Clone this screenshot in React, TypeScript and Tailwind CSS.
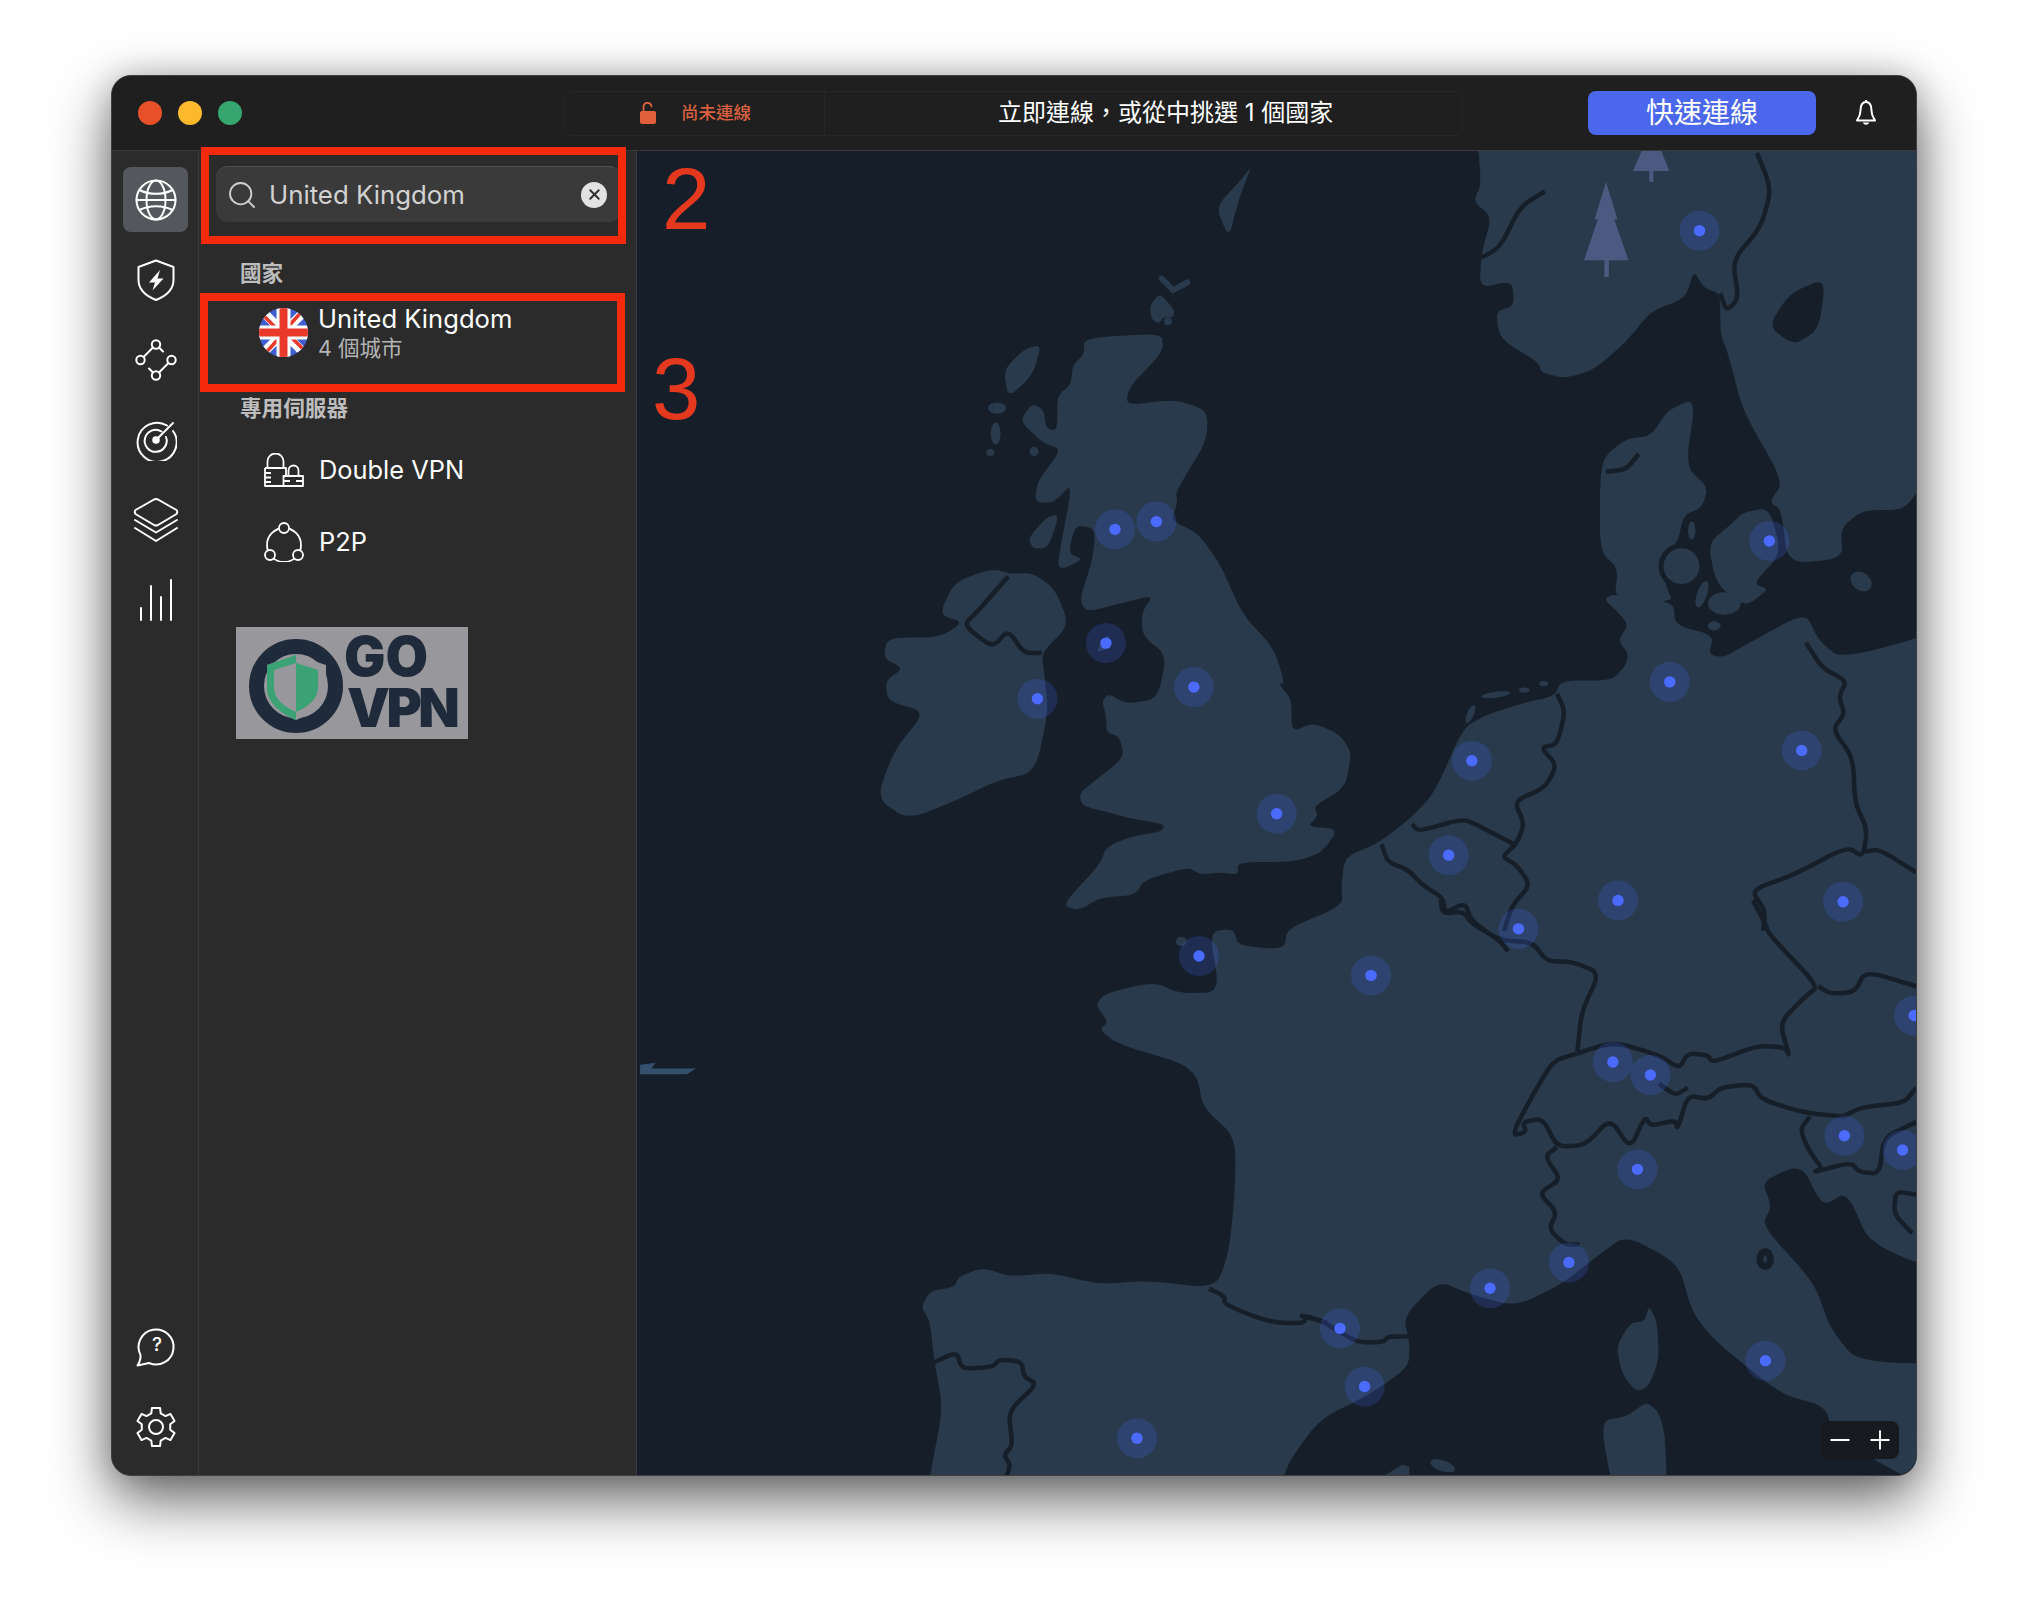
import { Search, X, Minus, Plus } from 'lucide-react';

// crop coordinates -> map coordinates, the outlines were traced per region
const north = 'translate(494.8 116) scale(.345 .3945)';
const east = 'translate(1005 116) scale(.3156 .3945)';
const southWest = 'translate(494.8 695.8) scale(.345 .296)';
const southEast = 'translate(1005 695.8) scale(.3156 .296)';

const SEA = '#161f29';
const LAND = '#283a4b';

// rounds each corner of a traced outline a little, keeps the coast shape
function curve(points: string, closed = true) {
  const p = points.trim().split(/\s+/).map((q) => q.split(',').map(Number));
  const t = 0.36;
  const toward = (a: number[], b: number[]) => `${a[0] + (b[0] - a[0]) * t} ${a[1] + (b[1] - a[1]) * t}`;
  const n = p.length;
  let d = '';
  if (closed) {
    for (let i = 0; i < n; i++) {
      const prev = p[(i + n - 1) % n];
      const next = p[(i + 1) % n];
      d += `${i === 0 ? 'M' : 'L'}${toward(p[i], prev)}Q${p[i][0]} ${p[i][1]} ${toward(p[i], next)}`;
    }
    return `${d}Z`;
  }
  d = `M${p[0][0]} ${p[0][1]}`;
  for (let i = 1; i < n - 1; i++) {
    d += `L${toward(p[i], p[i - 1])}Q${p[i][0]} ${p[i][1]} ${toward(p[i], p[i + 1])}`;
  }
  return `${d}L${p[n - 1][0]} ${p[n - 1][1]}`;
}

const britain =
  '995,368 1170,358 1172,395 1095,465 1090,500 1200,488 1272,510 1270,570 1200,670 1205,690 1190,725 1250,750 1300,810 1350,910 1420,975 1445,1045 1430,1045 1460,1075 1460,1140 1510,1122 1568,1145 1595,1180 1580,1250 1510,1285 1520,1305 1495,1325 1565,1330 1530,1375 1470,1395 1340,1395 1340,1420 1300,1415 1255,1420 1230,1405 1130,1430 1110,1460 1030,1465 985,1490 945,1480 1030,1400 1045,1365 1100,1345 1170,1335 1175,1320 1100,1310 1060,1300 990,1285 985,1260 1020,1235 1085,1190 1075,1150 1045,1140 1045,1110 1035,1080 1050,1065 1090,1085 1160,1075 1180,990 1125,950 1125,905 1150,872 1090,885 1000,905 985,880 1015,800 1020,740 975,735 960,790 990,800 975,810 945,820 935,810 970,650 930,690 885,690 890,650 945,585 905,575 850,530 880,495 905,510 910,545 935,550 935,480 965,460 970,420 995,400';
const ireland =
  '555,955 670,955 725,925 670,910 705,845 790,820 830,830 880,828 930,860 962,930 900,985 905,1020 915,1100 885,1220 800,1235 720,1270 600,1312 530,1270 570,1175 640,1100 555,1080 550,1040 590,1015 545,995';
const scandinavia =
  '430,-60 445,65 425,100 470,130 445,200 440,270 520,255 525,305 480,315 490,370 585,415 590,435 650,447 720,430 800,375 860,315 945,290 965,235 990,270 1030,280 1030,360 1050,400 1085,510 1185,650 1150,690 1180,705 1195,810 1330,800 1325,740 1380,705 1480,705 1520,660 1800,640 1800,-60';
const denmark =
  '735,650 745,600 800,565 860,560 900,510 970,485 945,620 1000,660 985,700 940,715 925,770 880,800 900,860 915,885 770,880 780,820 735,785';
const continent =
  '1248,459 1240,463 1251,473 1259,483 1251,495 1259,505 1257,514 1246,526 1207,526 1202,538 1179,543 1148,553 1131,563 1109,613 1090,633 1065,652 1040,662 1037,684 1038,700 995,718 993,734 957,731 954,718 935,720 943,767 912,768 892,759 854,768 847,777 857,790 850,796 864,807 914,822 926,833 930,856 955,879 955,921 950,968 940,996 885,990 850,993 812,984 781,987 760,980 741,987 738,995 719,998 712,1011 719,1021 722,1051 729,1089 719,1140 712,1200 990,1200 990,1140 1019,1098 1059,1078 1089,1057 1090,1039 1085,1018 1112,990 1138,1001 1172,1010 1207,993 1235,971 1257,955 1298,977 1308,1014 1325,1036 1377,1078 1411,1087 1418,1110 1453,1131 1480,1145 1560,1200 1560,1054 1437,1054 1415,1027 1403,992 1362,947 1370,933 1362,913 1393,900 1409,933 1428,921 1447,965 1560,1000 1560,470 1425,510 1406,495 1396,473 1352,497 1333,508 1321,506 1325,491 1295,483 1294,465';

const landNorth = [
  britain,
  ireland,
  '815,430 860,390 900,380 880,440 825,485',
  '870,760 910,720 940,712 915,780 880,780',
  '1290,110 1345,60 1372,28 1340,100 1320,172',
  '1020,985 1050,945 1055,975',
];
const bordersEast = [
  '630,1065 650,1100 630,1165 590,1170 630,1205 600,1250 525,1275 550,1320 530,1360 495,1385 530,1400 565,1440 520,1480 500,1530',
  '200,1360 215,1395 265,1410 300,1440 350,1465 355,1495 405,1475 420,1510 490,1550 510,1570',
  '275,1320 290,1335 400,1310 440,1325 525,1360',
  '1240,965 1280,1015 1340,1040 1320,1070 1335,1105 1305,1135 1355,1190 1360,1280 1390,1330 1380,1385 1340,1365 1210,1420 1105,1450 1140,1490 1135,1530',
  '1380,1375 1420,1370 1510,1415',
  '1120,5 1155,75 1130,150 1060,215 1075,290 1045,315 1030,280',
  '600,80 540,110 490,190 445,210',
  '750,630 800,625 830,595',
];
const bordersSouthEast = [
  '345,0 350,35 400,30 420,60 490,105 570,110 605,160 665,160 735,190 690,290 680,395',
  '680,400 770,370 880,405 930,440 950,400 1000,405 1010,425 1120,380 1190,385 1200,410 1175,320 1240,250 1270,225 1150,90 1140,60 1110,0',
  '1270,225 1300,245 1360,240 1385,185 1510,225',
  '680,400 620,420 570,510 530,590 525,615 555,605 545,580 595,570 630,645 700,640 760,570 810,650 845,565 860,590 920,575 925,600 950,510 1000,520 1030,490 1110,480 1130,520 1230,555 1330,565',
  '880,480 920,510 950,490',
  '630,645 600,670 640,730 585,765 630,815 610,860 650,900 685,900',
  '1330,565 1380,540 1480,530 1510,490',
  '1250,565 1225,600 1250,660 1280,700 1255,712 1350,685 1370,710 1420,715 1430,620 1510,580',
  '1510,770 1460,760 1455,820 1500,870',
  '0,1085 55,1100 85,1120 140,1155 205,1155 215,1140 265,1140',
];
const bordersSouthWest = [
  '1275,1015 1310,1035 1310,1055 1380,1090 1430,1105 1490,1105 1490,1085 1540,1105',
  '655,1210 710,1180 720,1225 790,1220 805,1200 855,1205 860,1245 890,1265 825,1335 835,1425 815,1450 830,1475 820,1510',
];

const servers = [
  [862, 409], [894, 403], [855, 497], [802, 540], [923, 531], [987, 629], [1138, 588], [1120, 661],
  [1174, 718], [1251, 696], [1425, 697], [1060, 754], [927, 739], [1314, 178], [1368, 418], [1291, 527],
  [1393, 580], [1247, 821], [1276, 831], [1266, 904], [1426, 878], [1471, 889], [1480, 785], [1213, 976],
  [1152, 996], [1036, 1027], [1055, 1072], [879, 1112], [1365, 1052],
];

function EuropeMap() {
  const line = { fill: 'none', stroke: SEA, strokeWidth: 4.5, vectorEffect: 'non-scaling-stroke' as const, strokeLinejoin: 'round' as const };
  return (
    <svg viewBox="492.4 116.4 989 1024" preserveAspectRatio="none" className="block w-full h-full">
      <rect x="490" y="114" width="995" height="1030" fill={SEA} />
      <path d={curve(continent)} fill={LAND} />
      <g transform={north} fill={LAND}>
        {landNorth.map((d) => (
          <path key={d} d={curve(d)} />
        ))}
        <ellipse cx="800" cy="505" rx="20" ry="11" />
        <ellipse cx="797" cy="555" rx="11" ry="22" />
        <ellipse cx="785" cy="592" rx="9" ry="7" />
        <ellipse cx="883" cy="590" rx="10" ry="9" />
        <path d={curve('825,835 780,880 755,905 725,930 790,975 825,940 860,985 900,985', false)} {...line} />
      </g>
      {/* Orkney and Shetland */}
      <path d="M898 215L907 224L918 218" fill="none" stroke={LAND} strokeWidth="4.5" strokeLinecap="round" />
      <path d={curve('889,236 896,227 902,232 908,240 907,245 899,245 896,250 890,246')} fill={LAND} />
      <circle cx="903" cy="248" r="3" fill={LAND} />
      <g transform={east} fill={LAND}>
        <path d={curve(scandinavia)} />
        <path d={curve(denmark)} />
        <ellipse cx="935" cy="815" rx="50" ry="40" stroke={SEA} strokeWidth="5" vectorEffect="non-scaling-stroke" />
        <path d={curve('1060,730 1085,710 1150,700 1180,790 1110,850 1150,860 1090,895 1020,850 1000,770')} />
        <ellipse cx="1040" cy="888" rx="40" ry="22" />
        <ellipse cx="985" cy="870" rx="12" ry="28" transform="rotate(25 985 870)" />
        <ellipse cx="1015" cy="932" rx="16" ry="9" />
        <ellipse cx="960" cy="745" rx="9" ry="18" />
        <ellipse cx="1375" cy="845" rx="27" ry="18" transform="rotate(20 1375 845)" />
        {/* Wadden islands */}
        <ellipse cx="480" cy="1067" rx="36" ry="6" transform="rotate(-6 480 1067)" />
        <ellipse cx="550" cy="1058" rx="13" ry="5" />
        <ellipse cx="597" cy="1045" rx="11" ry="5" />
        <ellipse cx="418" cy="1105" rx="8" ry="20" transform="rotate(30 418 1105)" />
        {bordersEast.map((d) => (
          <path key={d} d={curve(d, false)} {...line} />
        ))}
        <path d={curve('1288,250 1200,280 1148,345 1210,382 1272,350', true)} fill={SEA} />
        {/* trees */}
        <path d="M750 62L778 135L770 135L805 215L757 215V248H746V215H696L730 135H722Z" fill="#4a5a80" />
        <path d="M838 0H885L905 40H866V62H856V40H816Z" fill="#4a5a80" />
      </g>
      <g transform={southWest} fill="#34506e">
        <path d="M0 430L35 425L25 440H125L105 455H0Z" />
        <circle cx="1213" cy="108" r="12" fill={LAND} />
        {bordersSouthWest.map((d) => (
          <path key={d} d={curve(d, false)} {...line} />
        ))}
      </g>
      <g transform={southEast} fill={LAND}>
        {bordersSouthEast.map((d) => (
          <path key={d} d={curve(d, false)} {...line} />
        ))}
        <path d={curve('855,1060 875,1100 880,1200 855,1270 825,1285 790,1240 775,1165 810,1105 845,1100')} />
        <path d={curve('850,1310 880,1340 895,1400 900,1560 770,1560 735,1360 800,1350')} />
        <ellipse cx="350" cy="1478" rx="32" ry="14" transform="rotate(20 350 1478)" />
        <path d="M205 1505L250 1475L268 1480V1510Z" />
        <ellipse cx="1140" cy="938" rx="13" ry="19" fill="none" stroke={SEA} strokeWidth="7" vectorEffect="non-scaling-stroke" />
      </g>
      {servers.map(([x, y]) => (
        <g key={`${x}-${y}`}>
          <circle cx={x} cy={y} r="15.5" fill="#4468ff" opacity="0.2" />
          <circle cx={x} cy={y} r="4.4" fill="#4b6bff" />
        </g>
      ))}
    </svg>
  );
}

const iconProps = {
  fill: 'none',
  stroke: '#ffffff',
  strokeWidth: 2,
  strokeLinecap: 'round' as const,
  strokeLinejoin: 'round' as const,
};

function GlobeIcon() {
  return (
    <svg width="42" height="42" viewBox="0 0 42 42" {...iconProps}>
      <circle cx="21" cy="21" r="19.5" />
      <ellipse cx="21" cy="21" rx="9.5" ry="19.5" />
      <path d="M4.5 11C14 16 28 16 37.5 11M4.5 31C14 26 28 26 37.5 31M1.5 21H40.5" />
    </svg>
  );
}

function ShieldBoltIcon() {
  return (
    <svg width="38" height="42" viewBox="0 0 38 42" {...iconProps}>
      <path d="M19 1.5L36.5 8V21C36.5 30 29 37 19 41C9 37 1.5 30 1.5 21V8Z" />
      <path d="M23 11L12 23.5H18L15.5 31.5L26.5 19.5H20.5Z" fill="#ffffff" stroke="none" />
    </svg>
  );
}

function NodesIcon() {
  return (
    <svg width="42" height="42" viewBox="0 0 42 42" {...iconProps}>
      <circle cx="21" cy="5.5" r="4.2" />
      <circle cx="5.5" cy="21" r="4.2" />
      <circle cx="36.5" cy="21" r="4.2" />
      <circle cx="21" cy="36.5" r="4.2" />
      <path d="M18 8.5L8.5 18M24 8.5L28 12.5M33.5 24L24 33.5M18 33.5L14 29.5" />
    </svg>
  );
}

function RadarIcon() {
  return (
    <svg width="42" height="42" viewBox="0 0 42 42" {...iconProps}>
      <path d="M32 6.5A19.5 19.5 0 1 0 38 12" />
      <path d="M26.5 12.5A11 11 0 1 0 31 18" />
      <circle cx="21" cy="21" r="3.8" fill="#ffffff" stroke="none" />
      <path d="M21 21L38 4" />
    </svg>
  );
}

function LayersIcon() {
  return (
    <svg width="46" height="46" viewBox="0 0 46 46" {...iconProps}>
      <path d="M21 2.5Q23 1.5 25 2.5L43.5 13Q45 15 43.5 17L25 28Q23 29 21 28L2.5 17Q1 15 2.5 13Z" />
      <path d="M2 23L23 35.5L44 23M2 31L23 44L44 31" />
    </svg>
  );
}

function BarsIcon() {
  return (
    <svg width="34" height="42" viewBox="0 0 34 42" {...iconProps}>
      <path d="M2 41V29M12 41V7M22 41V18M32 41V1" />
    </svg>
  );
}

function HelpIcon() {
  return (
    <div className="relative w-[42px] h-[42px]">
      <svg width="42" height="42" viewBox="0 0 42 42" {...iconProps}>
        <path d="M5.5 29A17.5 17.5 0 1 1 14 37L2.5 39.5Q6 34 5.5 29Z" />
      </svg>
      <span className="absolute inset-0 flex items-center justify-center pb-[3px] pl-[3px] text-[19px] font-medium text-white">?</span>
    </div>
  );
}

function GearIcon() {
  const pts: string[] = [];
  const at = (deg: number, r: number) => {
    const a = (deg * Math.PI) / 180;
    return `${(21 + r * Math.cos(a)).toFixed(2)} ${(21 + r * Math.sin(a)).toFixed(2)}`;
  };
  for (let i = 0; i < 6; i++) {
    const a = i * 60 - 90;
    pts.push(at(a - 19, 14.5), at(a - 12, 19.5), at(a + 12, 19.5), at(a + 19, 14.5));
  }
  return (
    <svg width="42" height="42" viewBox="0 0 42 42" {...iconProps}>
      <path d={`M${pts.join('L')}Z`} />
      <circle cx="21" cy="21" r="7" />
    </svg>
  );
}

function BellIcon() {
  return (
    <svg width="22" height="28" viewBox="0 0 22 28" fill="none" stroke="#ffffff" strokeWidth="2" strokeLinejoin="round">
      <path d="M11 3C6.5 3 5.5 7 5.5 11.5C5.5 16.5 3.5 19 2 21.5H20C18.5 19 16.5 16.5 16.5 11.5C16.5 7 15.5 3 11 3Z" />
      <path d="M11 1V3" />
      <path d="M8 23.5H14C13.6 26.5 8.4 26.5 8 23.5Z" fill="#ffffff" stroke="none" />
    </svg>
  );
}

function UkFlag() {
  return (
    <svg width="49" height="49" viewBox="0 0 49 49" className="shrink-0">
      <defs>
        <clipPath id="flag-round">
          <circle cx="24.5" cy="24.5" r="24.5" />
        </clipPath>
      </defs>
      <g clipPath="url(#flag-round)">
        <rect width="49" height="49" fill="#3f5fd0" />
        <path d="M0 0L49 49M49 0L0 49" stroke="#ffffff" strokeWidth="9" />
        <path d="M0 3L21 24M49 46L28 25M46 0L27 21M3 49L22 28" stroke="#e8392a" strokeWidth="3.5" />
        <path d="M24.5 0V49M0 24.5H49" stroke="#ffffff" strokeWidth="14" />
        <path d="M24.5 0V49M0 24.5H49" stroke="#e8392a" strokeWidth="8" />
      </g>
    </svg>
  );
}

function DoubleVpnIcon() {
  return (
    <svg width="40" height="34" viewBox="0 0 40 34" fill="none" stroke="#ffffff" strokeWidth="1.8" strokeLinejoin="round">
      <path d="M3.5 15V8.5A8 8 0 0 1 19.5 8.5V15" />
      <path d="M1 15H22V23M19 33H1V15M1 20H7M1 24.5H7M1 29H7" />
      <path d="M24.5 23V17.5A5 5 0 0 1 34.5 17.5V23" />
      <path d="M19.5 23H39V33H19.5ZM19.5 28H26M32 28H39" />
    </svg>
  );
}

function P2pIcon() {
  return (
    <svg width="40" height="40" viewBox="0 0 40 40" fill="none" stroke="#ffffff" strokeWidth="1.8">
      <circle cx="20" cy="23" r="17" />
      <circle cx="20" cy="6" r="5" fill="#2b2b2b" />
      <circle cx="6" cy="33" r="5" fill="#2b2b2b" />
      <circle cx="34" cy="33" r="5" fill="#2b2b2b" />
    </svg>
  );
}

function LockOpenIcon() {
  return (
    <svg width="16" height="22" viewBox="0 0 16 22" fill="none">
      <path d="M3.5 9V5A4 4 0 0 1 11.5 4.5" stroke="#e0603a" strokeWidth="1.8" strokeLinecap="round" />
      <rect y="9" width="16" height="13" rx="2" fill="#e0603a" />
    </svg>
  );
}

function GoVpnLogo() {
  return (
    <svg width="232" height="112" viewBox="0 0 232 112" className="block">
      <rect width="232" height="112" fill="#98979c" />
      <circle cx="60" cy="59" r="39.5" fill="none" stroke="#1f2b3a" strokeWidth="15" />
      <path d="M60 28L31 38V60C31 76 44 86 60 93C76 86 90 76 90 60V38Z" fill="#98979c" />
      <path d="M60 28L31 38V60C31 76 44 86 60 93V85C47 79 38 72 38 60V43L60 36Z" fill="#3aa274" />
      <path d="M60 36L82 43V60C82 72 73 79 60 85Z" fill="#3aa274" />
      <text x="108" y="49" fill="#1f2b3a" fontSize="55" fontWeight="900" className="font-['Inter']">GO</text>
      <text x="111" y="100" fill="#1f2b3a" fontSize="54" fontWeight="900" letterSpacing="-3.5" className="font-['Inter']">VPN</text>
    </svg>
  );
}

function RailSlot({ active, children }: { active?: boolean; children: React.ReactNode }) {
  return (
    <div className={`w-[65px] h-[65px] rounded-[8px] flex items-center justify-center ${active ? 'bg-[#54585c]' : ''}`}>
      {children}
    </div>
  );
}

function SectionLabel({ children }: { children: React.ReactNode }) {
  return <div className="pl-[41px] h-[28px] leading-[28px] text-[21.6px] font-semibold text-[#bdbdbd]">{children}</div>;
}

export default function App() {
  return (
    <div className="w-[2028px] h-[1624px] bg-white pt-[75px] pl-[111px] font-['Inter','Noto_Sans_CJK_TC',sans-serif]">
      <div className="relative w-[1806px] h-[1401px]">
        <div className="w-full h-full rounded-[20px] overflow-hidden flex flex-col bg-[#2b2b2b] border border-[#3d3f42] shadow-[0_24px_60px_rgba(0,0,0,0.6),0_0_30px_rgba(0,0,0,0.18)]">
          {/* Title bar */}
          <div className="h-[75px] shrink-0 flex items-center bg-[#1f1f1f] border-b border-[#3a3a3a]">
            <div className="flex gap-[16px] pl-[26px]">
              <span className="w-[24px] h-[24px] rounded-full bg-[#e8502a]" />
              <span className="w-[24px] h-[24px] rounded-full bg-[#fdb92c]" />
              <span className="w-[24px] h-[24px] rounded-full bg-[#36a56f]" />
            </div>
            <div className="ml-[322px] w-[899px] h-[45px] flex items-center rounded-[6px] border border-[#262626]">
              <div className="w-[260px] h-full flex items-center gap-[25px] pl-[75px] border-r border-[#262626]">
                <LockOpenIcon />
                <span className="text-[17.5px] font-medium text-[#d9603f]">尚未連線</span>
              </div>
              <span className="pl-[173px] text-[24px] text-white whitespace-nowrap">立即連線，或從中挑選 1 個國家</span>
            </div>
            <button className="ml-[125px] w-[228px] h-[44px] rounded-[8px] bg-[#4b67ec] text-[28px] text-white">快速連線</button>
            <div className="ml-[39px]"><BellIcon /></div>
          </div>

          <div className="flex-1 min-h-0 flex">
            {/* Icon rail */}
            <div className="w-[87px] shrink-0 flex flex-col items-center gap-[15px] pt-[16px] pb-[16px] pl-[1px] border-r border-[#3a3a3a]">
              <RailSlot active><GlobeIcon /></RailSlot>
              <RailSlot><ShieldBoltIcon /></RailSlot>
              <RailSlot><NodesIcon /></RailSlot>
              <RailSlot><RadarIcon /></RailSlot>
              <RailSlot><LayersIcon /></RailSlot>
              <RailSlot><BarsIcon /></RailSlot>
              <div className="flex-1" />
              <RailSlot><HelpIcon /></RailSlot>
              <RailSlot><GearIcon /></RailSlot>
            </div>

            {/* List panel */}
            <div className="w-[438px] shrink-0 pt-[15px] border-r border-[#3a3a3a]">
              <div className="ml-[17px] mr-[15px] h-[56px] flex items-center rounded-[12px] bg-[#3a3a3a] border-t border-[#505050] pl-[10px] pr-[14px]">
                <Search size={32} color="#cfcfcf" strokeWidth={1.4} />
                <span className="ml-[11px] flex-1 text-[25.8px] pt-[1px] text-[#d2d2d2]">United Kingdom</span>
                <span className="w-[26px] h-[26px] rounded-full bg-[#e2e2e2] flex items-center justify-center">
                  <X size={17} color="#2b2b2b" strokeWidth={2.6} />
                </span>
              </div>

              <div className="mt-[37px]"><SectionLabel>國家</SectionLabel></div>
              <div className="mt-[13px] h-[64px] flex items-center pl-[60px] gap-[10px]">
                <UkFlag />
                <div>
                  <div className="text-[25.6px] leading-[32px] text-white">United Kingdom</div>
                  <div className="text-[21.5px] leading-[26px] text-[#b4b4b4]">4 個城市</div>
                </div>
              </div>

              <div className="mt-[30px]"><SectionLabel>專用伺服器</SectionLabel></div>
              <div className="mt-[12px] h-[72px] flex items-center pl-[65px] gap-[15px]">
                <DoubleVpnIcon />
                <span className="text-[25.4px] text-white">Double VPN</span>
              </div>
              <div className="h-[72px] flex items-center pl-[65px] gap-[15px]">
                <P2pIcon />
                <span className="text-[25.4px] text-white">P2P</span>
              </div>

              <div className="mt-[49px] ml-[37px]"><GoVpnLogo /></div>
            </div>

            {/* Map */}
            <div className="relative flex-1 min-w-0 overflow-hidden">
              <EuropeMap />
              <div className="absolute right-[17px] bottom-[16px] w-[78px] h-[38px] rounded-[8px] bg-[#171b1f] flex items-center justify-between px-[4px]">
                <Minus size={30} color="#ffffff" strokeWidth={1.5} />
                <Plus size={30} color="#ffffff" strokeWidth={1.5} />
              </div>
            </div>
          </div>
        </div>

        {/* Red annotations */}
        <div className="absolute left-[90px] top-[72px] w-[425px] h-[97px] border-[8px] border-[#f52a0d]" />
        <div className="absolute left-[89px] top-[218px] w-[425px] h-[99px] border-[8px] border-[#f52a0d]" />
        <span className="absolute left-[551px] top-[80px] text-[87px] leading-none text-[#e5391f] font-['Liberation_Sans',sans-serif]">2</span>
        <span className="absolute left-[541px] top-[270px] text-[87px] leading-none text-[#e5391f] font-['Liberation_Sans',sans-serif]">3</span>
      </div>
    </div>
  );
}
